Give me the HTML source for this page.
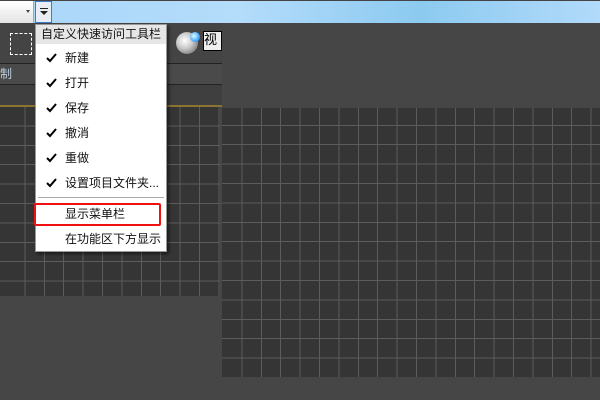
<!DOCTYPE html>
<html><head><meta charset="utf-8"><style>
*{margin:0;padding:0;box-sizing:border-box}
body{width:600px;height:400px;overflow:hidden;background:#464646;position:relative;font-family:"Liberation Sans","Noto Sans CJK SC",sans-serif}
.a{position:absolute}
.grid{background-color:#353535;
background-image:repeating-linear-gradient(90deg,transparent 0,transparent 18.4px,#5c5c5c 18.4px,#5c5c5c 19.4px),
repeating-linear-gradient(0deg,transparent 0,transparent 18.4px,#5c5c5c 18.4px,#5c5c5c 19.4px);}
.item{position:absolute;left:29px;font-size:12px;color:#111;line-height:16px;white-space:nowrap}
.ck{position:absolute;left:10px;width:11px;height:10px}
</style></head><body>
<div class="a" style="left:0;top:0;width:600px;height:23px;background:linear-gradient(90deg,#aad6f8,#b4dcfb 40%,#8ccaf0 70%,#b2dafa);border-top:1px solid #444"></div>
<div class="a" style="left:0;top:1px;width:34px;height:22px;background:linear-gradient(#fff,#e4e4e4);border-right:1px solid #9ab"></div>
<div class="a" style="left:26px;top:10px;width:0;height:0;border-left:2px solid transparent;border-right:2px solid transparent;border-top:3px solid #444"></div>
<div class="a" style="left:35px;top:1px;width:17px;height:22px;background:#e8eef4;border:1px solid #3b7bd0"></div>
<div class="a" style="left:40px;top:8px;width:8px;height:1px;background:#222"></div>
<div class="a" style="left:40px;top:11px;width:0;height:0;border-left:4px solid transparent;border-right:4px solid transparent;border-top:4px solid #222"></div>
<div class="a" style="left:0;top:23px;width:222px;height:40px;background:#444"></div>
<div class="a" style="left:10px;top:33px;width:22px;height:22px;border:1px dashed #fff"></div>
<div class="a" style="left:176px;top:32px;width:22px;height:22px;border-radius:50%;background:radial-gradient(circle at 40% 40%,#fff,#ccc 40%,#666 90%)"></div>
<div class="a" style="left:190px;top:32px;width:10px;height:10px;border-radius:50%;background:radial-gradient(circle at 40% 40%,#dff,#39f 70%)"></div>
<div class="a" style="left:203px;top:31px;width:19px;height:20px;background:#eee;border:1px solid #000;font-size:13px;line-height:16px;overflow:hidden;color:#000">视</div>
<div class="a" style="left:0;top:63px;width:222px;height:1px;background:#222"></div>
<div class="a" style="left:0;top:64px;width:222px;height:20px;background:#4a4a4a;color:#bcd;font-size:12px;line-height:20px">制</div>
<div class="a" style="left:0;top:84px;width:222px;height:1px;background:#222"></div>
<div class="a" style="left:0;top:85px;width:222px;height:20px;background:#3f3f3f"></div>
<div class="a" style="left:0;top:105px;width:222px;height:2px;background:#8a7430"></div>
<div class="a grid" style="left:0;top:107px;width:220px;height:189px;background-position:6px 4px"></div>
<div class="a grid" style="left:222px;top:108px;width:378px;height:269px;background-position:1px 0px"></div>
<div class="a" style="left:222px;top:23px;width:378px;height:85px;background:#464646"></div>
<div class="a" style="left:35px;top:24px;width:132px;height:228px;background:#fff;border:1px solid #999;box-shadow:2px 2px 3px rgba(0,0,0,.5)">
 <div class="a" style="left:0;top:0;width:130px;height:19px;background:#e6e6e6;font-size:12px;line-height:19px;padding-left:5px;color:#111;white-space:nowrap">自定义快速访问工具栏</div>
 <svg class="ck" style="top:28px" viewBox="0 0 11 10"><path d="M1 5l3 3 6-7" stroke="#000" stroke-width="2" fill="none"/></svg>
 <div class="item" style="top:25px">新建</div>
 <svg class="ck" style="top:53px" viewBox="0 0 11 10"><path d="M1 5l3 3 6-7" stroke="#000" stroke-width="2" fill="none"/></svg>
 <div class="item" style="top:50px">打开</div>
 <svg class="ck" style="top:78px" viewBox="0 0 11 10"><path d="M1 5l3 3 6-7" stroke="#000" stroke-width="2" fill="none"/></svg>
 <div class="item" style="top:75px">保存</div>
 <svg class="ck" style="top:103px" viewBox="0 0 11 10"><path d="M1 5l3 3 6-7" stroke="#000" stroke-width="2" fill="none"/></svg>
 <div class="item" style="top:100px">撤消</div>
 <svg class="ck" style="top:128px" viewBox="0 0 11 10"><path d="M1 5l3 3 6-7" stroke="#000" stroke-width="2" fill="none"/></svg>
 <div class="item" style="top:125px">重做</div>
 <svg class="ck" style="top:153px" viewBox="0 0 11 10"><path d="M1 5l3 3 6-7" stroke="#000" stroke-width="2" fill="none"/></svg>
 <div class="item" style="top:150px">设置项目文件夹...</div>
 <div class="a" style="left:2px;top:172px;width:126px;height:1px;background:#aaa"></div>
 <div class="item" style="top:181px">显示菜单栏</div>
 <div class="item" style="top:206px">在功能区下方显示</div>
</div>
<div class="a" style="left:34px;top:203px;width:127px;height:23px;border:2px solid #f01010;border-radius:2px"></div>
</body></html>
